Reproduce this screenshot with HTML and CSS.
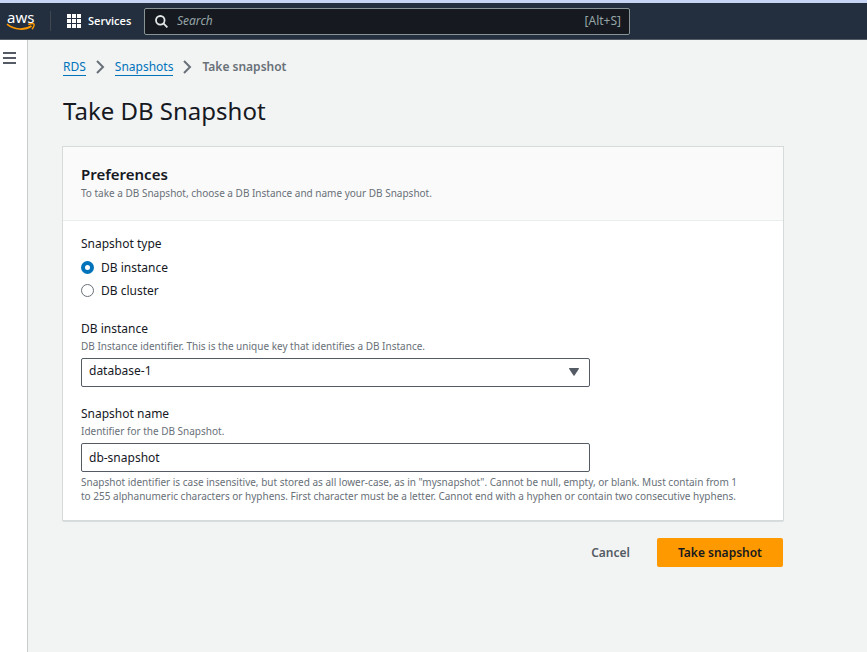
FILE: index.html
```html
<!DOCTYPE html>
<html lang="en">
<head>
<meta charset="utf-8">
<title>Take DB Snapshot</title>
<link rel="stylesheet" href="styles.css">
</head>
<body>
<header class="topbar">
  <a class="logo" href="#" aria-label="AWS home">
    <span class="logo-word">aws</span>
    <svg class="logo-smile" viewBox="0 0 30 8" aria-hidden="true">
      <path d="M1 1.2C8.500 7.300 19 7.300 25.500 3" fill="none" stroke="#ff9900" stroke-width="1.700"/>
      <path d="M22.300 1.500C25 .4 27.500.5 28 1.100S27.600 4.500 26 6.200" fill="none" stroke="#ff9900" stroke-width="1.400"/>
    </svg>
  </a>
  <button class="services" type="button">
    <svg width="14" height="14" viewBox="0 0 14 14" fill="#fff" aria-hidden="true">
      <path d="M0 0h4v4H0zM5 0h4v4H5zM10 0h4v4h-4zM0 5h4v4H0zM5 5h4v4H5zM10 5h4v4h-4zM0 10h4v4H0zM5 10h4v4H5zM10 10h4v4h-4z"/>
    </svg>
    <span>Services</span>
  </button>
  <label class="search">
    <svg width="13" height="13" viewBox="0 0 13 13" fill="none" stroke="#e4e8e8" stroke-width="1.800" aria-hidden="true">
      <circle cx="5.300" cy="5.300" r="4.300"/><path d="M8.400 8.400l4 4"/>
    </svg>
    <input type="search" placeholder="Search" aria-label="Search">
    <span class="shortcut">[Alt+S]</span>
  </label>
</header>
<div class="shell">
  <aside class="rail">
    <button class="menu" type="button" aria-label="Open navigation">
      <svg width="13" height="12" viewBox="0 0 13 12" fill="#545b64" aria-hidden="true"><path d="M0 0h13v2H0zM0 5h13v2H0zM0 10h13v2H0z"/></svg>
    </button>
  </aside>
  <main class="content">
    <nav class="crumbs" aria-label="Breadcrumb">
      <a href="#">RDS</a>
      <svg class="chevron" viewBox="0 0 9 14" aria-hidden="true"><path d="M1 1l6 6-6 6"/></svg>
      <a href="#">Snapshots</a>
      <svg class="chevron" viewBox="0 0 9 14" aria-hidden="true"><path d="M1 1l6 6-6 6"/></svg>
      <span class="current">Take snapshot</span>
    </nav>
    <h1>Take DB Snapshot</h1>
    <form>
      <section class="panel">
        <div class="panel-head">
          <h2>Preferences</h2>
          <p class="hint">To take a DB Snapshot, choose a DB Instance and name your DB Snapshot.</p>
        </div>
        <div class="panel-body">
          <fieldset class="field">
            <legend>Snapshot type</legend>
            <label class="option"><input type="radio" name="type" checked><span>DB instance</span></label>
            <label class="option"><input type="radio" name="type"><span>DB cluster</span></label>
          </fieldset>
          <div class="field">
            <label class="name" for="instance">DB instance</label>
            <p class="hint">DB Instance identifier. This is the unique key that identifies a DB Instance.</p>
            <div class="select">
              <select id="instance" class="control"><option>database-1</option></select>
              <svg class="caret" width="10" height="8" viewBox="0 0 10 8" fill="#545b64" aria-hidden="true"><path d="M.5 0h9q.7.200.3.900L5.500 7.500q-.5.600-1 0L.2.900Q-.2.200.5 0z"/></svg>
            </div>
          </div>
          <div class="field">
            <label class="name" for="snapshot">Snapshot name</label>
            <p class="hint">Identifier for the DB Snapshot.</p>
            <input id="snapshot" class="control" type="text" value="db-snapshot">
            <p class="hint constraint">Snapshot identifier is case insensitive, but stored as all lower-case, as in "mysnapshot". Cannot be null, empty, or blank. Must contain from 1 to 255 alphanumeric characters or hyphens. First character must be a letter. Cannot end with a hyphen or contain two consecutive hyphens.</p>
          </div>
        </div>
      </section>
      <div class="actions">
        <button class="btn" type="button">Cancel</button>
        <button class="btn primary" type="button">Take snapshot</button>
      </div>
    </form>
  </main>
</div>
</body>
</html>
```
FILE: styles.css
```css
* { box-sizing: border-box; }
body {
  margin: 0;
  min-height: 100vh;
  display: flex;
  flex-direction: column;
  background: #f2f3f3;
  color: #16191f;
  font: 12px/18px "Noto Sans", "Open Sans", sans-serif;
}
h1, h2, p { margin: 0; }
button, input, select { font: inherit; color: inherit; }
button { border: 0; background: none; padding: 0; }

.topbar {
  display: flex;
  align-items: center;
  height: 40px;
  padding-left: 6px;
  border-top: 3px solid #c5d5f3;
  border-bottom: 1px solid #545b64;
  background: #232f3e;
  color: #fff;
}
.logo {
  display: flex;
  flex-direction: column;
  width: 45px;
  height: 20px;
  border-right: 1px solid #414750;
  color: #fff;
  text-decoration: none;
}
.logo-word { font-size: 15px; line-height: 12px; padding-left: 1px; }
.logo-smile { width: 30px; height: 8px; }
.services { display: flex; align-items: center; gap: 7px; width: 93px; padding-left: 16px; font: 600 11px/18px "Open Sans", sans-serif; }
.search {
  display: flex;
  align-items: center;
  gap: 9px;
  flex: 0 1 486px;
  height: 27px;
  padding: 0 8px 0 10px;
  border: 1px solid #879596;
  border-radius: 2px;
  background: #161920;
}
.search input { flex: 1; min-width: 0; border: 0; padding: 0; background: none; outline: 0; }
.search input::placeholder { color: #95a5a6; font-style: italic; }
.shortcut { color: #95a5a6; }

.shell { display: flex; flex: 1; }
.rail { flex: none; width: 28px; border-right: 1px solid #c8cccc; background: #fff; }
.menu { display: block; margin: 12px 0 0 3px; }
.menu svg { display: block; }
.content { flex: 0 1 755px; padding: 18px 0 40px 35px; }

.crumbs { display: flex; align-items: center; gap: 10px; }
.crumbs a { color: #0073bb; text-decoration: none; line-height: 16px; border-bottom: 1px solid; }
.chevron { width: 9px; height: 14px; fill: none; stroke: #687078; stroke-width: 2; }
.current { color: #687078; font-weight: 600; }
h1 { margin: 17px 0 18px; font-size: 24px; line-height: 36px; font-weight: 400; }

.panel { background: #fff; box-shadow: 0 0 0 1px #d5dbdb, 0 1px 1px #687078; }
.panel-head { height: 74px; padding: 17px 18px; border-bottom: 1px solid #eaeded; background: #fafafa; }
h2 { margin-bottom: 2px; font-size: 15px; line-height: 20px; font-weight: 600; }
.hint { color: #687078; font-size: 10px; line-height: 14px; }
.panel-body { display: grid; gap: 18px; padding: 14px 18px 17px; }
.field { min-width: 0; margin: 0; padding: 0; border: 0; }
legend { padding: 0; margin-bottom: 3px; }
.name { display: block; margin-bottom: 1px; }
.option { display: flex; align-items: center; gap: 7px; width: max-content; height: 23px; }
.option input { appearance: none; width: 13px; height: 13px; margin: 0; border: 1px solid #687078; border-radius: 50%; background: #fff; }
.option input:checked { border: 4px solid #0073bb; }
.control { display: block; width: 100%; max-width: 509px; height: 29px; padding: 0 7px; border: 1px solid #545b64; border-radius: 2px; background: #fff; }
.select { position: relative; max-width: 509px; }
.select .control { appearance: none; padding-bottom: 4px; }
.caret { position: absolute; right: 11px; top: 10px; pointer-events: none; }
.hint + .control, .hint + .select { margin-top: 5px; }
.constraint { margin-top: 3px; padding-right: 22px; }

.actions { display: flex; justify-content: flex-end; gap: 6px; margin-top: 18px; }
.btn { height: 29px; padding: 0 21px; border-radius: 2px; color: #545b64; font-weight: 600; }
.primary { background: #ff9900; color: #16191f; }
```
